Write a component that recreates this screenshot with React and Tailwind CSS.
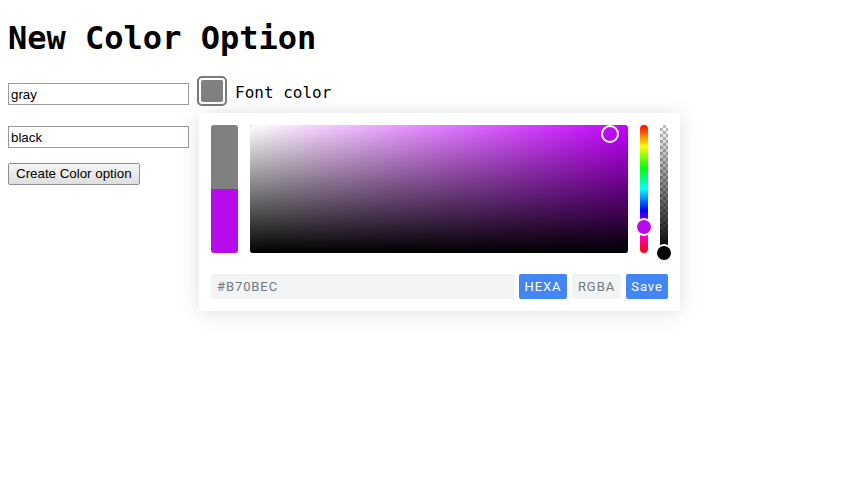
import React from "react";

const mono = { fontFamily: '"DejaVu Sans Mono", monospace' };

const ColorPicker = () => {
  return (
    <div
      className="absolute left-[199px] top-[113px] w-[481px] rounded-[2px] bg-white p-3 shadow-[0_2px_24px_0_rgba(0,0,0,0.1),0_0_16px_0_rgba(0,0,0,0.03)]"
      style={{ fontFamily: 'Roboto, "Liberation Sans", Arial, sans-serif' }}
    >
      {/* preview + palette + sliders */}
      <div className="flex h-[128px] gap-3">
        <div className="flex w-[27px] flex-col overflow-hidden rounded-[3px]">
          <div className="flex-1 bg-[#808080]" />
          <div className="flex-1 bg-[#b70bec]" />
        </div>

        <div className="relative flex-1 overflow-hidden rounded-[3px] bg-[#c400ff]">
          <div className="absolute inset-0 bg-[linear-gradient(to_right,#fff,rgba(255,255,255,0))]" />
          <div className="absolute inset-0 bg-[linear-gradient(to_top,#000,rgba(0,0,0,0))]" />
          <div className="absolute left-[351px] top-0 h-[18px] w-[18px] rounded-full border-2 border-white" />
        </div>

        <div className="relative w-2">
          <div className="h-full w-2 rounded-full bg-[linear-gradient(to_bottom,red,#ff0,lime,cyan,blue,#f0f,red)]" />
          <div className="absolute left-[-5px] top-[93px] h-[18px] w-[18px] rounded-full border-2 border-white bg-[#b70bec]" />
        </div>

        <div className="relative w-2">
          <div className="h-full w-2 bg-[repeating-conic-gradient(#bdbdbd_0_25%,#fff_0_50%)] bg-[length:6px_6px]">
            <div className="h-full w-full bg-[linear-gradient(to_bottom,rgba(0,0,0,0),#000)]" />
          </div>
          <div className="absolute left-[-5px] top-[119px] h-[18px] w-[18px] rounded-full border-2 border-white bg-black" />
        </div>
      </div>

      {/* bottom row */}
      <div className="mt-[21px] flex h-[25px] gap-[5px] text-[13px] tracking-[0.07em]">
        <div className="flex flex-1 items-center rounded-[2px] bg-[#f1f3f4] px-[6px] text-[#75797e]">
          #B70BEC
        </div>
        <div className="flex w-[48px] items-center justify-center rounded-[2px] bg-[#4285f4] text-white">
          HEXA
        </div>
        <div className="flex w-[49px] items-center justify-center rounded-[2px] bg-[#f1f3f4] text-[#75797e]">
          RGBA
        </div>
        <div className="flex w-[42px] items-center justify-center rounded-[2px] bg-[#4285f4] text-white">
          Save
        </div>
      </div>
    </div>
  );
};

export default function App() {
  const inputCls =
    "block h-[22px] w-[181px] border border-[#9a9a9a] bg-white px-[2px] text-[13.33px] leading-[18px] text-black outline-none";

  return (
    <div
      className="relative min-h-[491px] bg-white px-2 pt-5 text-black"
      style={{ fontFamily: '"Liberation Sans", Arial, sans-serif' }}
    >
      <h1 className="text-[32px] font-bold leading-[37px]" style={mono}>
        New Color Option
      </h1>

      <div className="mt-[19px] flex gap-2">
        {/* form */}
        <div className="flex flex-col items-start pt-[7px]">
          <input className={inputCls} defaultValue="gray" />
          <input className={`${inputCls} mt-[21px]`} defaultValue="black" />
          <button className="mt-[15px] block h-[22px] rounded-[2px] border border-[#8f8f8f] bg-[linear-gradient(to_bottom,#f6f6f6,#dedede)] px-[7px] text-[13.33px] text-black">
            Create Color option
          </button>
        </div>

        {/* font color swatch */}
        <div className="flex h-[30px] items-center gap-2">
          <div className="h-[30px] w-[30px] rounded-[5px] border-2 border-[#7a7a7a] p-[1px]">
            <div className="h-full w-full rounded-[3px] border border-white bg-[#808080]" />
          </div>
          <span className="pt-[3px] text-[16px]" style={mono}>
            Font color
          </span>
        </div>
      </div>

      <ColorPicker />
    </div>
  );
}
